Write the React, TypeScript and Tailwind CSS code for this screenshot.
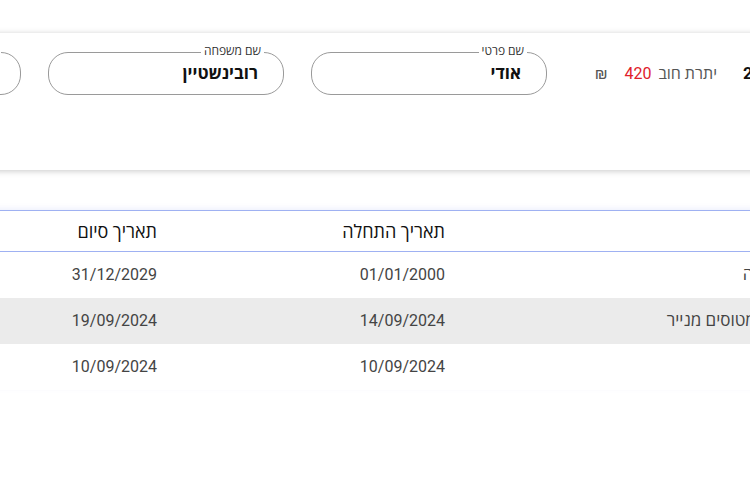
import React from "react";

const font = { fontFamily: 'Roboto, "Open Sans", "Noto Sans", "DejaVu Sans", sans-serif' };

type Row = { name: string; start: string; end: string; shaded?: boolean };

const rows: Row[] = [
  { name: "מתנה", start: "01/01/2000", end: "31/12/2029" },
  { name: "חוג מטוסים מנייר", start: "14/09/2024", end: "19/09/2024", shaded: true },
  { name: "", start: "10/09/2024", end: "10/09/2024" },
];

function Field({ label, value }: { label: string; value: string }) {
  // מסגרת מעוגלת עם תווית שיושבת על הקו העליון
  return (
    <div className="relative h-[43px] w-[236px] shrink-0 rounded-[20px] border border-[#9a9a9a] bg-white">
      <span className="absolute -top-[9px] right-[19px] bg-white px-[3px] text-[12px] leading-[15px] text-[#333]">
        {label}
      </span>
      <div className="flex h-full items-center pr-[25px] text-[17px] font-bold text-[#111]">
        {value}
      </div>
    </div>
  );
}

const cols = "grid-cols-[202px_337px_288px_288px_1fr]";

export default function App() {
  return (
    <div className="relative h-[500px] w-[750px] overflow-hidden bg-white" style={font}>
      <div dir="rtl" className="-ml-[300px] w-[1300px]">
        {/* כרטיס פרטי לקוח */}
        <div className="mt-[33px] h-[137px] bg-white pt-[19px] shadow-[0_1px_6px_rgba(0,0,0,0.22)]">
          <div className="flex items-start">
            <div className="flex h-[43px] w-[257px] shrink-0 items-center justify-end text-[17px] font-bold text-[#111]">
              <span dir="ltr">2,150</span>
            </div>
            <div className="mr-[26px] flex h-[43px] w-[124px] shrink-0 items-center gap-[7px] text-[16px]">
              <span className="text-[#555]">יתרת חוב</span>
              <span className="text-[#e0202a]">420</span>
              <span className="mr-[10px] text-[#555]">₪</span>
            </div>
            <div className="mr-[46px] flex gap-[27px]">
              <Field label="שם פרטי" value="אודי" />
              <Field label="שם משפחה" value="רובינשטיין" />
              <Field label="ת.ז." value="" />
            </div>
          </div>
        </div>

        {/* טבלת מנויים */}
        <div className="mt-[40px] border-t border-[#9fb1f2] shadow-[0_-2px_5px_rgba(120,140,230,0.12)]">
          <div className={`grid h-[41px] ${cols} items-center border-b border-[#9fb1f2] text-[18px] text-[#111]`}>
            <div className="pr-[16px]">#</div>
            <div className="pr-[16px]">שם</div>
            <div className="pr-[16px]">תאריך התחלה</div>
            <div className="pr-[16px]">תאריך סיום</div>
            <div className="pr-[16px]">סטטוס</div>
          </div>
          {rows.map((r, i) => (
            <div
              key={i}
              className={`grid h-[46px] ${cols} items-center text-[16px] text-[#444] ${
                r.shaded ? "bg-[#ebebeb]" : "bg-white"
              }`}
            >
              <div className="pr-[16px]">{i + 1}</div>
              <div className="pr-[16px] text-[17px]">{r.name}</div>
              <div className="pr-[16px]">{r.start}</div>
              <div className="pr-[16px]">{r.end}</div>
              <div className="pr-[16px]">פעיל</div>
            </div>
          ))}
        </div>
      </div>
    </div>
  );
}
